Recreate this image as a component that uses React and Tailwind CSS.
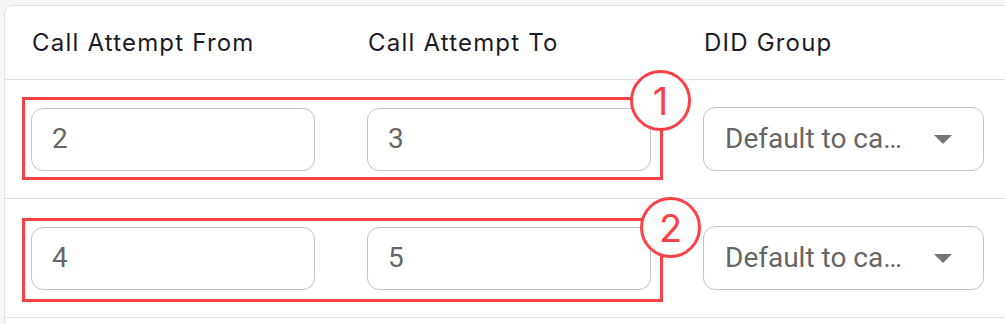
import React from "react";

const rows = [
  { from: "2", to: "3" },
  { from: "4", to: "5" },
];

function Field({ value }) {
  return (
    <div className="w-[284px] h-[63px] rounded-[12px] border border-[#c4c4c4] bg-white flex items-center pl-[20px] text-[28px] text-[#666666]" style={{ fontFamily: "Roboto, 'Liberation Sans', sans-serif" }}>
      {value}
    </div>
  );
}

function Select() {
  return (
    <div className="w-[281px] h-[64px] rounded-[12px] border border-[#c4c4c4] bg-white flex items-center pl-[21px] pr-[31px] text-[28px] text-[#666666]" style={{ fontFamily: "Roboto, 'Liberation Sans', sans-serif" }}>
      <span className="flex-1 whitespace-nowrap">Default to ca…</span>
      <svg width="18" height="9" viewBox="0 0 18 9" className="ml-2">
        <path d="M0 0 L18 0 L9 9 Z" fill="#757575" />
      </svg>
    </div>
  );
}

export default function App() {
  return (
    <div className="relative w-[1005px] h-[324px] bg-[#f6f6f6] pt-[5px] pl-[4px] overflow-hidden" style={{ fontFamily: "Inter, 'Noto Sans', sans-serif" }}>
      <div className="w-[1030px] bg-white border border-[#e0e0e0] rounded-tl-[8px] h-[340px]">
        <div className="h-[74px] flex items-center border-b border-[#e0e0e0] text-[24px] tracking-[0.05em] text-[#1c1c28]">
          <div className="w-[363px] pl-[27px]">Call Attempt From</div>
          <div className="w-[336px]">Call Attempt To</div>
          <div className="">DID Group</div>
        </div>
        {rows.map((r, i) => (
          <div key={i} className="h-[119px] flex items-center border-b border-[#e0e0e0] pl-[26px]">
            <Field value={r.from} />
            <div className="ml-[52px]"><Field value={r.to} /></div>
            <div className="ml-[52px]"><Select /></div>
          </div>
        ))}
      </div>

      <div className="absolute left-[22px] top-[97px] w-[641px] h-[83px] border-[3px] border-[#fb4146]" />
      <div className="absolute left-[630px] top-[70px] w-[61px] h-[61px] rounded-full border-[3px] border-[#fb4146] bg-white flex items-center justify-center text-[38px] leading-none text-[#fb4146]" style={{ fontFamily: "Inter, 'Noto Sans', sans-serif" }}>1</div>

      <div className="absolute left-[22px] top-[218px] w-[641px] h-[84px] border-[3px] border-[#fb4146]" />
      <div className="absolute left-[640px] top-[197px] w-[61px] h-[61px] rounded-full border-[3px] border-[#fb4146] bg-white flex items-center justify-center text-[38px] leading-none text-[#fb4146]" style={{ fontFamily: "Inter, 'Noto Sans', sans-serif" }}>2</div>
    </div>
  );
}
